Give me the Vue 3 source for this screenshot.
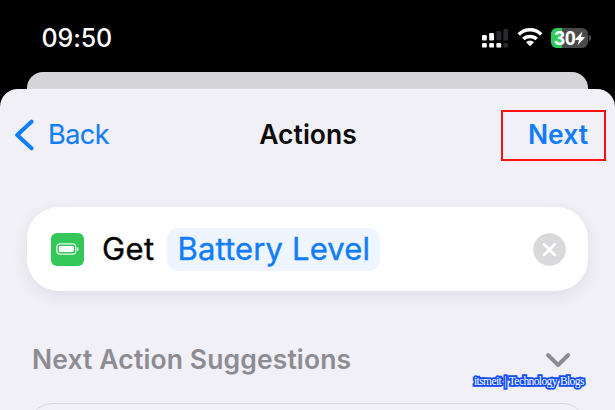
<script setup>
const title = 'Actions'
const parameter = 'Battery Level'
const battery = 30
</script>

<template>
  <main class="phone">
    <header class="status">
      <time class="clock">09:50</time>
      <div class="indicators">
        <svg class="signal" width="26" height="20" viewBox="0 0 26 20">
          <g fill="#fff">
            <rect x="0" y="6" width="4.8" height="5.4" rx="1.2" />
            <rect x="7.2" y="4" width="4.8" height="7.4" rx="1.2" />
            <rect x="0" y="14" width="4.8" height="4.6" rx="1.2" />
            <rect x="7.2" y="14" width="4.8" height="4.6" rx="1.2" />
            <rect x="14.4" y="14" width="4.8" height="4.6" rx="1.2" />
          </g>
          <g fill="#2b2b2d">
            <rect x="14.4" y="2" width="4.8" height="9.4" rx="1.2" />
            <rect x="21.4" y="0" width="4.6" height="11.4" rx="1.2" />
            <rect x="21.4" y="14" width="4.6" height="4.6" rx="1.2" />
          </g>
        </svg>
        <svg class="wifi" width="26" height="20" viewBox="0 0 26 20">
          <g fill="none" stroke="#fff" stroke-width="3.5">
            <path d="M1.8 7.4C8 1.2 18 1.2 24.2 7.4" />
            <path d="M6.3 12.1C10 8.5 16 8.5 19.7 12.1" />
          </g>
          <path d="M9 15.1Q13 11.9 17 15.1L13.8 18.6Q13 19.4 12.2 18.6Z" fill="#fff" />
        </svg>
        <div class="battery">
          <div class="cell">
            <i class="fill" :style="{ width: battery + '%' }"></i>
            <span class="percent">{{ battery }}</span>
            <svg class="bolt" width="10" height="15" viewBox="0 0 10 15">
              <path d="M7.4 .4L.3 8.2Q0 8.9 .7 8.9H4L2.5 14.5L9.6 6.7Q9.9 6 9.2 6H6Z" fill="#fff" />
            </svg>
          </div>
          <i class="tip"></i>
        </div>
      </div>
    </header>

    <div class="sheet-behind"></div>
    <section class="sheet">
      <nav class="nav">
        <a class="back">
          <svg width="20" height="33" viewBox="0 0 20 33">
            <path d="M17.5 2.7L3.2 16L17.5 29.3" fill="none" stroke="#117dfb" stroke-width="4" stroke-linecap="round" stroke-linejoin="round" />
          </svg>
          <span>Back</span>
        </a>
        <h1>{{ title }}</h1>
        <a class="next"><span>Next</span></a>
      </nav>

      <article class="card">
        <div class="app-icon">
          <svg width="24" height="12" viewBox="0 0 24 12">
            <rect x=".8" y=".8" width="19" height="10.4" rx="3.2" fill="none" stroke="#e9faec" stroke-width="1.2" />
            <rect x="2.8" y="2.9" width="15" height="6.2" rx="1.3" fill="#fff" />
            <path d="M21 4.1Q22.6 4.6 22.6 6T21 7.9Z" fill="#e9faec" />
          </svg>
        </div>
        <span class="verb">Get</span>
        <span class="token"><span>{{ parameter }}</span></span>
        <svg class="clear" width="33" height="33" viewBox="0 0 33 33">
          <circle cx="16.5" cy="16.5" r="16.3" fill="#d9d9db" />
          <path d="M11 11.2L21.8 22M21.8 11.2L11 22" stroke="#fff" stroke-width="2.8" stroke-linecap="round" />
        </svg>
      </article>

      <div class="section-head">
        <h2>Next Action Suggestions</h2>
        <svg width="26" height="17" viewBox="0 0 26 17">
          <path d="M3 3L13.1 13L23.2 3" fill="none" stroke="#8b8b91" stroke-width="3.9" stroke-linecap="round" stroke-linejoin="round" />
        </svg>
      </div>
      <div class="list"></div>
    </section>
    <div class="watermark">itsmeit | Technology Blogs</div>
  </main>
</template>

<style>
body { background: #000; }
</style>

<style scoped>
.phone {
  position: relative;
  display: flex;
  flex-direction: column;
  width: 615px;
  height: 410px;
  overflow: hidden;
  background: #000;
  font-family: Inter, "Liberation Sans", sans-serif;
  white-space: nowrap;
}
svg { display: block; flex: none; }
.status {
  display: flex;
  flex: none;
  justify-content: space-between;
  align-items: flex-start;
  height: 72px;
  padding: 24px 24px 0 41.5px;
  box-sizing: border-box;
}
.clock { color: #fff; font-size: 25px; font-weight: 500; line-height: 29px; letter-spacing: -.1px; }
.indicators { display: flex; padding-top: 4px; height: 20px; }
.signal { margin: 1px 9px 0 0; }
.wifi { margin-right: 8px; margin-top: -1px; }
.battery { display: flex; align-items: center; gap: 1px; height: 20px; }
.cell {
  position: relative;
  display: flex;
  align-items: center;
  width: 37px;
  height: 20px;
  padding-left: 3px;
  box-sizing: border-box;
  border-radius: 6px;
  overflow: hidden;
  background: #4a4a4c;
}
.fill { position: absolute; inset: 0 auto 0 0; background: #30cc59; }
.percent { position: relative; color: #fff; font: 700 20px/20px "Liberation Sans", sans-serif; letter-spacing: -.4px; }
.bolt { position: relative; }
.tip { width: 2px; height: 6px; border-radius: 0 3px 3px 0; background: #4a4a4c; }
.sheet-behind { flex: none; height: 17px; margin: 0 27px; border-radius: 16px 16px 0 0; background: #d4d4d9; }
.sheet {
  display: flex;
  flex: 1;
  flex-direction: column;
  background: #f1f0f6;
  border-radius: 18px 18px 0 0;
}
.nav {
  display: grid;
  grid-template-columns: 1fr auto 1fr;
  align-items: center;
  height: 52px;
  margin-top: 20px;
  padding: 0 9px 0 14px;
  font-size: 26px;
  line-height: 32px;
}
.back { display: flex; align-items: center; gap: 14px; color: #117dfb; font-size: 27px; letter-spacing: -.5px; -webkit-text-stroke: .2px; }
h1 { margin: 0 4px 0 0; padding-bottom: 2px; font-size: 26.5px; font-weight: 600; letter-spacing: 0; color: #0b0b0d; }
.next {
  display: flex;
  justify-self: end;
  align-items: center;
  justify-content: flex-end;
  width: 105px;
  height: 51px;
  padding: 0 16px 2px 0;
  box-sizing: border-box;
  border: 2px solid #fb1010;
  color: #117dfb;
  font-size: 26.5px;
  font-weight: 600;
}
.card {
  display: flex;
  align-items: center;
  height: 84px;
  margin: 46px 27px 0;
  padding: 0 22px 0 24px;
  box-sizing: border-box;
  border-radius: 32px;
  background: #fff;
  box-shadow: 0 5px 16px rgba(50, 40, 90, .09);
  font-size: 31px;
  line-height: 42px;
}
.app-icon { display: flex; align-items: center; justify-content: center; width: 33px; height: 33px; border-radius: 6px; background: #34c759; }
.verb { width: 65px; margin-left: 18px; color: #050505; -webkit-text-stroke: .4px; letter-spacing: .4px; }
.token { width: 213px; height: 43px; padding-left: 10.5px; box-sizing: border-box; border-radius: 11px; background: #eff5fe; color: #117dfb; letter-spacing: .15px; -webkit-text-stroke: .4px; }
.clear { margin-left: auto; }
.section-head { display: flex; justify-content: space-between; align-items: center; height: 32px; margin: 53px 44px 0 32px; }
h2 { margin: 0; padding-bottom: 2px; color: #8d8c93; font-size: 26.5px; font-weight: 600; line-height: 32px; letter-spacing: .12px; }
.list { height: 60px; margin: 26.5px 27px 0; box-sizing: border-box; border: 1.5px solid #d8d7dd; border-radius: 26px; }
.watermark {
  position: absolute;
  left: 474px;
  top: 374px;
  color: #fff;
  font: 11.5px/15px "Liberation Serif", serif;
  letter-spacing: -.6px;
  word-spacing: .8px;
  -webkit-text-stroke: 3.4px #0f4cf5;
  paint-order: stroke fill;
}
</style>
